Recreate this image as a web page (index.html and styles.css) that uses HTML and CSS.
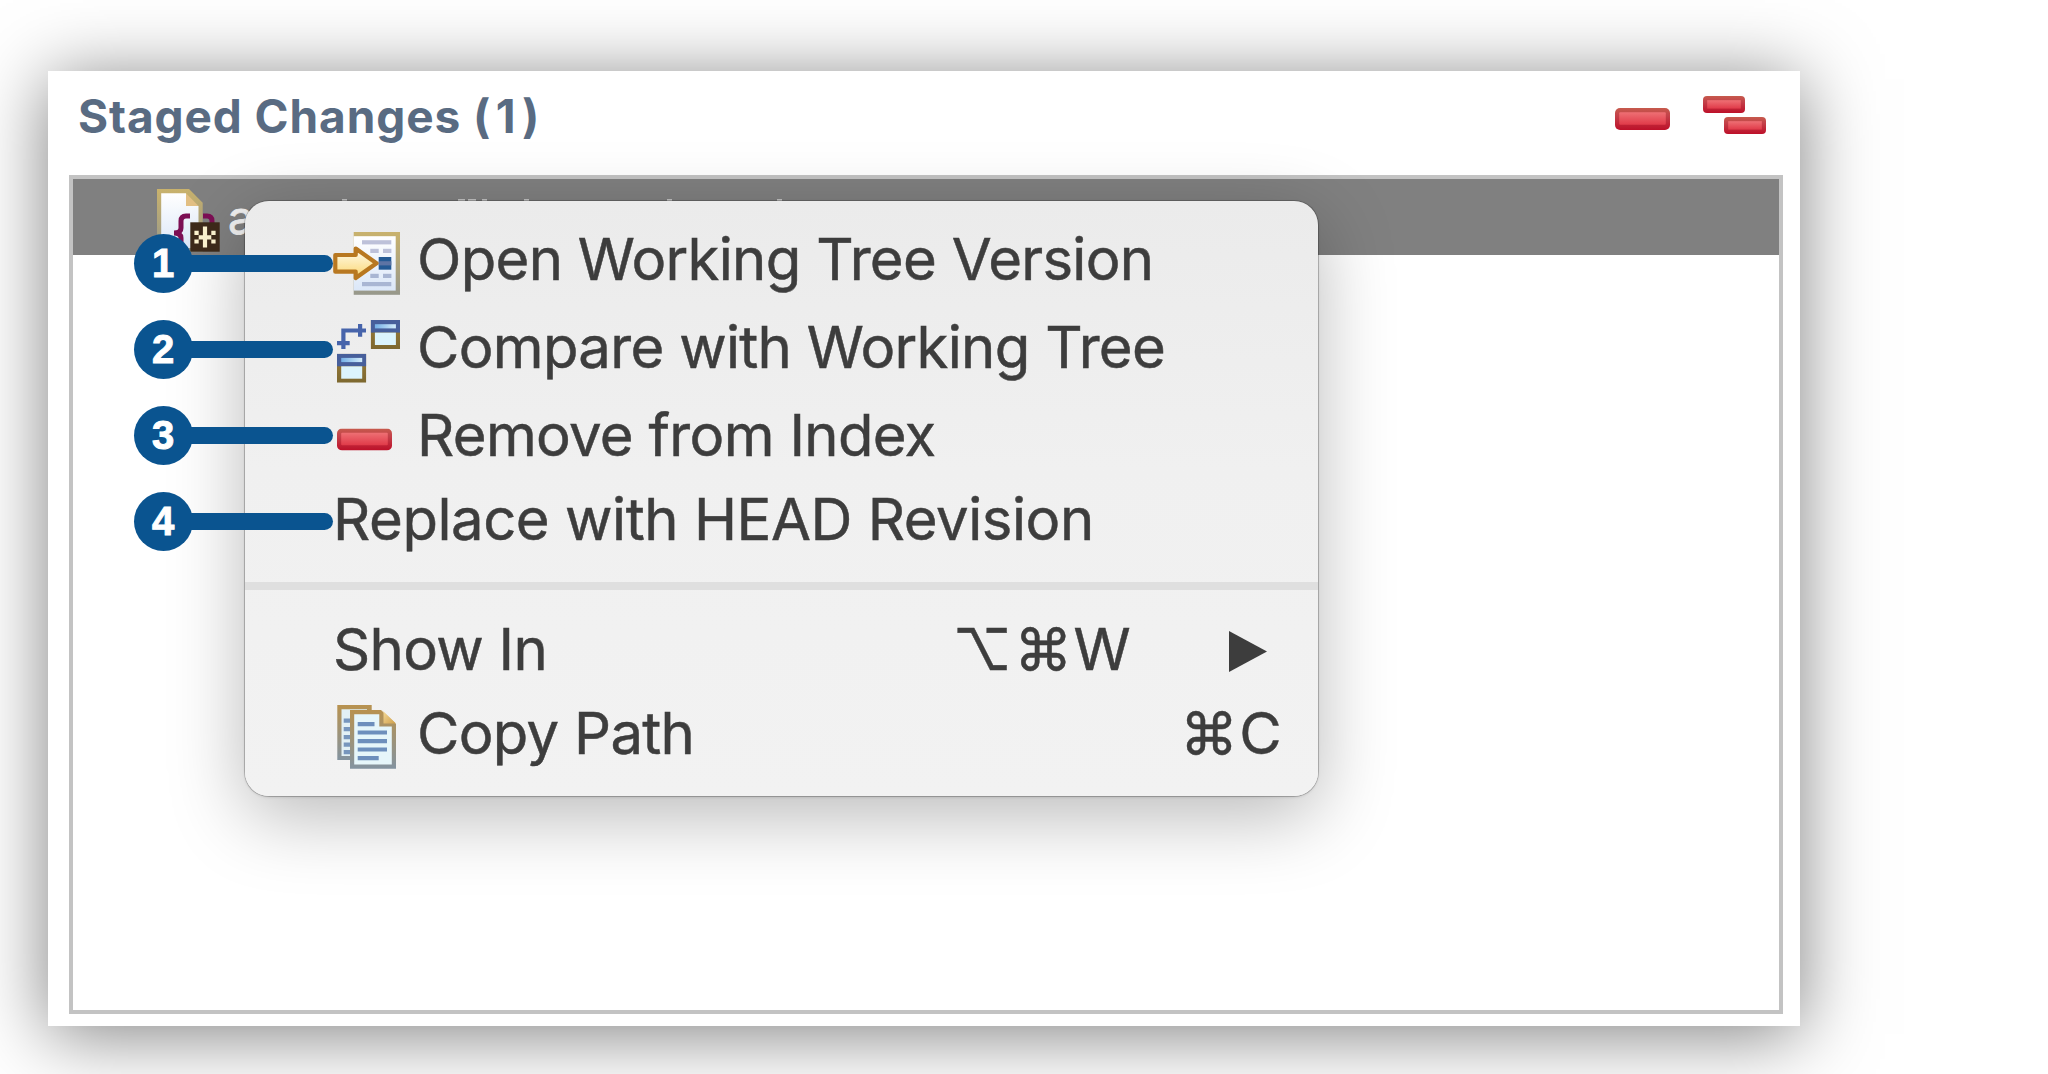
FILE: index.html
```html
<!DOCTYPE html>
<html lang="en">
<head>
<meta charset="utf-8">
<title>Staged Changes</title>
<link rel="stylesheet" href="styles.css">
</head>
<body>
<svg class="defs" width="0" height="0" aria-hidden="true">
  <defs>
    <linearGradient id="redEdge" x1="0" y1="0" x2="0" y2="1"><stop offset="0" stop-color="#c65a4c"/><stop offset=".35" stop-color="#c4414a"/><stop offset="1" stop-color="#bd1029"/></linearGradient>
    <linearGradient id="redFill" x1="0" y1="0" x2="0" y2="1"><stop offset="0" stop-color="#ee7074"/><stop offset="1" stop-color="#e03a49"/></linearGradient>
    <linearGradient id="paperEdge" x1="0" y1="0" x2="0" y2="1"><stop offset="0" stop-color="#c9b26c"/><stop offset="1" stop-color="#97988c"/></linearGradient>
    <linearGradient id="paperFill" x1="0" y1="0" x2="0" y2="1"><stop offset="0" stop-color="#ffffff"/><stop offset="1" stop-color="#dbe7f8"/></linearGradient>
    <linearGradient id="copyEdge" x1="0" y1="0" x2="0" y2="1"><stop offset="0" stop-color="#b8924f"/><stop offset="1" stop-color="#8393a0"/></linearGradient>
    <linearGradient id="foldFill" x1="0" y1="0" x2="1" y2="1"><stop offset="0" stop-color="#f8dfa0"/><stop offset="1" stop-color="#cf9f49"/></linearGradient>
    <linearGradient id="arrowFill" x1="0" y1="0" x2="0" y2="1"><stop offset="0" stop-color="#fffdf0"/><stop offset="1" stop-color="#fbd670"/></linearGradient>
    <linearGradient id="skyFill" x1="0" y1="0" x2="1" y2="0"><stop offset="0" stop-color="#74b0e6"/><stop offset="1" stop-color="#d3ecfb"/></linearGradient>
    <linearGradient id="woodEdge" x1="0" y1="0" x2="0" y2="1"><stop offset="0" stop-color="#9b7c3a"/><stop offset="1" stop-color="#7d682f"/></linearGradient>
    <symbol id="minus" viewBox="0 0 55 22">
      <rect width="55" height="22" rx="5" fill="url(#redEdge)"/>
      <rect x="4.2" y="4.2" width="46.6" height="12.6" rx="1" fill="url(#redFill)"/>
    </symbol>
    <symbol id="window" viewBox="0 0 29.3 29">
      <rect width="29.3" height="29" fill="url(#woodEdge)"/>
      <rect width="29.3" height="12.6" fill="#475f9b"/>
      <rect x="4.2" y="4.2" width="21" height="4.2" fill="url(#skyFill)"/>
      <rect x="4.2" y="12.6" width="21" height="12.4" fill="#dcf4fc"/>
    </symbol>
  </defs>
</svg>

<main class="panel">
  <header class="panel-header">
    <h1 class="title">Staged Changes <span class="count">(1)</span></h1>
    <div class="tools">
      <svg class="tool-single" width="55" height="22"><use href="#minus"/></svg>
      <svg class="tool-double" width="64" height="39" viewBox="0 0 64 39">
        <rect width="42" height="17" rx="4" fill="url(#redEdge)"/><rect x="4.2" y="4.2" width="33.6" height="8.4" fill="url(#redFill)"/>
        <rect x="21" y="21" width="42" height="17" rx="4" fill="url(#redEdge)"/><rect x="25.2" y="25.2" width="33.6" height="8.4" fill="url(#redFill)"/>
      </svg>
    </div>
  </header>
  <section class="file-list">
    <div class="file-row">
      <svg class="file-icon" width="66" height="67" viewBox="0 0 66 67">
        <path d="M0 1H32L45.7 14.7V64H0Z" fill="url(#paperEdge)"/>
        <path d="M4.2 5.2H29V18H41.5V60H4.2Z" fill="url(#paperFill)"/>
        <path d="M29 5.2L41.5 18H29Z" fill="#e3c084"/>
        <path d="M33 28H29Q24 28 24 33V40Q24 45 17 45Q24 45 24 50V57Q24 62 30 62M46 28H50Q55 28 55 33V40" fill="none" stroke="#7d0f55" stroke-width="5"/>
        <rect x="33.3" y="34.3" width="29.4" height="29.4" fill="#3e2b1b"/>
        <path d="M45.9 38.6h4.2v8.6h4.2v4.2h-4.2v8.2h-4.2v-8.2h-4.2v-4.2h4.2ZM37.4 42.8h4.3V47h-4.3ZM54.3 42.8h4.3V47h-4.3ZM37.4 51.4h4.3v4.2h-4.3ZM54.3 51.4h4.3v4.2h-4.3Z" fill="#fff6d2"/>
      </svg>
      <span class="file-name">a</span>
      <!-- ascender tops that stay visible above the menu edge -->
      <svg class="ascenders" width="450" height="4" viewBox="0 0 450 4" fill="#c4c4c4">
        <rect x="0" y="1" width="5" height="2"/><rect x="116" y="1" width="7" height="2"/><rect x="126" y="1" width="8" height="2"/><rect x="140" y="1" width="5" height="2"/><rect x="182" y="1" width="5" height="2"/><rect x="325" y="1" width="5" height="2"/><rect x="435" y="1" width="5" height="2"/>
      </svg>
    </div>
  </section>
</main>

<nav class="menu">
  <div class="item">
    <svg class="icon" viewBox="0 0 67 68">
      <rect x="20.7" y="3" width="46.3" height="62.8" fill="url(#paperEdge)"/>
      <rect x="20.7" y="7.2" width="42" height="54.4" fill="url(#paperFill)"/>
      <g fill="#bdc1d9"><rect x="29" y="11.2" width="29.3" height="4.2"/><rect x="37.3" y="19.8" width="8.4" height="4.2"/><rect x="50" y="19.8" width="8.4" height="4.2"/></g>
      <g fill="#a9b6d3"><rect x="37.3" y="44.8" width="8.4" height="4.2"/><rect x="50" y="44.8" width="8.4" height="4.2"/><rect x="29" y="53" width="29.3" height="4.2"/></g>
      <rect x="45.7" y="28" width="12.6" height="12.7" fill="#245a94"/><rect x="45.7" y="32.2" width="12.6" height="4.2" fill="#5d74a4"/>
      <path d="M2.3 26H22.7V19.5L43.5 34.3L22.7 49V42.7H2.3Z" fill="url(#arrowFill)" stroke="#b87821" stroke-width="4.2" stroke-linejoin="round"/>
    </svg>
    <span class="label">Open Working Tree Version</span>
  </div>
  <div class="item">
    <svg class="icon" viewBox="0 0 67 68">
      <use href="#window" x="37.7" y="3" width="29.3" height="29"/>
      <use href="#window" x="4" y="36.7" width="29.3" height="29"/>
      <path d="M8.3 11.4H25V7h4.2v4.4H33v4.2h-3.8v4.2H25v-4.2H12.5V24h4.2v4.2h-4.2V32H8.3v-3.8H4V24h4.3Z" fill="#4764ab"/>
    </svg>
    <span class="label">Compare with Working Tree</span>
  </div>
  <div class="item">
    <svg class="icon" viewBox="0 0 67 68"><use href="#minus" x="4" y="23.5" width="55" height="22"/></svg>
    <span class="label">Remove from Index</span>
  </div>
  <div class="item replace"><span class="label">Replace with HEAD Revision</span></div>
  <div class="separator"></div>
  <div class="item show">
    <span class="label">Show In</span>
    <span class="keys"><span class="opt">⌥</span><span class="cmd">⌘</span><span>W</span></span>
    <svg class="submenu" width="38" height="42" viewBox="0 0 38 42"><path d="M0 0L38 20.5L0 41Z" fill="#3d3d3d"/></svg>
  </div>
  <div class="item copy">
    <svg class="icon" viewBox="0 0 67 68">
      <path d="M4.3 2H38.7V57H4.3Z" fill="url(#copyEdge)"/><path d="M8.5 6.2H34V53H8.5Z" fill="#e2f0f5"/>
      <path d="M10.7 15.5h6.3v4.2h-6.3ZM10.7 24h6.3v4.2h-6.3ZM10.7 32h6.3v4.2h-6.3ZM10.7 39.5h6.3v4.2h-6.3ZM10.7 47h6.3v4.2h-6.3Z" fill="#7796bd"/>
      <path d="M17 7H48L63 21V65.7H17Z" fill="url(#copyEdge)"/><path d="M21.2 11.2H46.3V23.4H58.8V61.5H21.2Z" fill="#e6f6fa"/>
      <path d="M49 7L63 20.5H50.5V9Z" fill="url(#foldFill)"/>
      <path d="M24.7 19h16.8v4.2H24.7ZM24.7 27.4H54v4.2H24.7ZM24.7 36H54v4.2H24.7ZM24.7 44.4H54v4.2H24.7ZM24.7 53h21v4.2h-21Z" fill="#6d8fbc"/>
    </svg>
    <span class="label">Copy Path</span>
    <span class="keys"><span class="cmd">⌘</span><span>C</span></span>
  </div>
</nav>

<ol class="callouts">
  <li class="callout"><span class="num">1</span><span class="line"></span></li>
  <li class="callout"><span class="num">2</span><span class="line"></span></li>
  <li class="callout"><span class="num">3</span><span class="line"></span></li>
  <li class="callout"><span class="num">4</span><span class="line"></span></li>
</ol>
</body>
</html>
```
FILE: styles.css
```css
* { box-sizing: border-box; }

body {
  margin: 0;
  height: 1074px;
  padding: 71px 248px 48px 48px;
  overflow: hidden;
  position: relative;
  background: #fff;
  font-family: Inter, "Liberation Sans", sans-serif;
}

.defs { position: absolute; }

.panel {
  height: 955px;
  padding: 0 17px 12px 21px;
  display: flex;
  flex-direction: column;
  background: #fff;
  box-shadow: 0 8px 70px rgba(0, 0, 0, .5);
}

.panel-header {
  height: 104px;
  padding: 0 16px 0 9px;
  display: flex;
  justify-content: space-between;
}

.title {
  margin: 0;
  font-size: 46px;
  font-weight: 700;
  line-height: 91px;
  letter-spacing: .9px;
  color: #596b82;
}

.count { letter-spacing: 5.5px; }

.tools {
  display: flex;
  align-items: flex-start;
  gap: 33px;
}

.tool-single { margin-top: 37px; }
.tool-double { margin-top: 25px; }

.file-list {
  flex: 1;
  border: 4px solid #c3c3c3;
}

.file-row {
  height: 76px;
  padding: 9px 0 0 84px;
  display: flex;
  align-items: flex-start;
  background: #808080;
}

.file-name {
  width: 26px;
  margin-left: 5px;
  font-size: 46px;
  line-height: 58px;
  color: #f2f2f2;
  -webkit-text-stroke: .8px #f2f2f2;
}

.ascenders {
  margin: 10px 0 0 88px;
}

.menu {
  position: absolute;
  left: 245px;
  top: 201px;
  width: 1073px;
  height: 595px;
  padding: 14px 0 20px;
  border-radius: 24px;
  background: linear-gradient(#ebebeb, #f0f0f0 45%, #f2f2f2);
  box-shadow: 0 0 0 1px rgba(0, 0, 0, .2), 0 1px 3px rgba(0, 0, 0, .15), 0 20px 76px rgba(0, 0, 0, .28);
  color: #3d3d3d;
}

.item {
  height: 88px;
  padding-left: 88px;
  display: flex;
  align-items: center;
  font-size: 58px;
  line-height: 70px;
  letter-spacing: -.68px;
  white-space: nowrap;
  -webkit-text-stroke: .5px #3d3d3d;
}

.icon {
  width: 67px;
  height: 68px;
  margin: 8px 17px 0 0;
}

.replace {
  height: 80px;
  padding-left: 88px;
  letter-spacing: -.45px;
}

.separator {
  height: 8px;
  margin: 23px 0 18px;
  background: #dfdfdf;
}

.show { height: 82px; }
.copy { height: 86px; }

.keys {
  margin-left: auto;
  display: flex;
}

.show .keys { margin-right: 99px; }
.copy .keys { margin-right: 37px; }

.opt { margin-right: 3px; }
.cmd { margin-right: 2px; }

.submenu { margin: 5px 51px 0 0; }

.callouts {
  position: absolute;
  left: 134px;
  top: 234px;
  margin: 0;
  padding: 0;
  list-style: none;
  display: grid;
  gap: 27px;
}

.callout {
  height: 59px;
  display: flex;
  align-items: center;
}

.num {
  width: 59px;
  height: 59px;
  padding-right: 1px;
  border-radius: 50%;
  background: #0a5490;
  color: #fff;
  font: 700 40px/59px "Liberation Sans", Arial, sans-serif;
  text-align: center;
  -webkit-text-stroke: 1px #fff;
}

.line {
  width: 150px;
  height: 17px;
  margin: 0 0 0 -10px;
  border-radius: 0 9px 9px 0;
  background: #0a5490;
}
```
